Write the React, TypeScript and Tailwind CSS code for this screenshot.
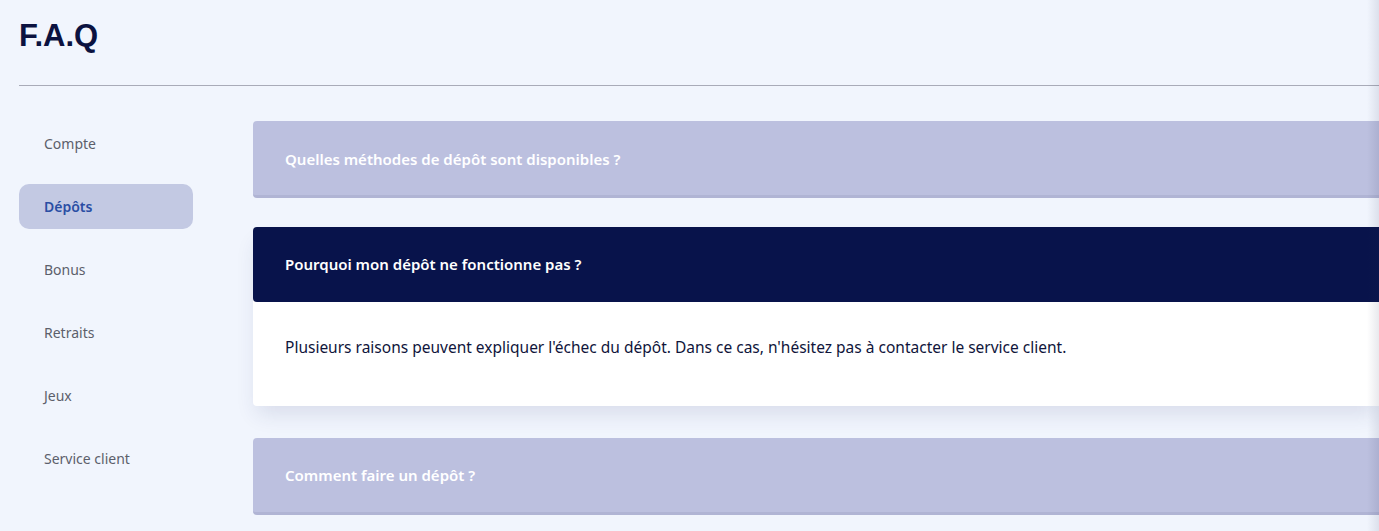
import React from "react";

const items = ["Compte", "Dépôts", "Bonus", "Retraits", "Jeux", "Service client"];

export default function App() {
  return (
    <div className="relative min-h-[531px] w-full overflow-hidden bg-[#f1f5fd]" style={{ fontFamily: '"Noto Sans", sans-serif' }}>
      <div className="px-[19px] pt-[16px]">
        <h1 className="text-[31px] leading-[40px] font-bold text-[#0b1240]" style={{ fontFamily: '"Liberation Sans", Arial, sans-serif' }}>F.A.Q</h1>
      </div>
      <div className="ml-[19px] mt-[29px] h-px bg-[#a9abb8]" />
      <div className="flex pl-[19px] pt-[35px]">
        <nav className="flex w-[174px] shrink-0 flex-col gap-[18px]">
          {items.map((it) => (
            <div
              key={it}
              className={`flex h-[45px] items-center rounded-[10px] pl-[25px] text-[14px] ${
                it === "Dépôts" ? "bg-[#c3c9e3] font-semibold text-[#2a4ea4]" : "text-[#5c5f6b]"
              }`}
            >
              {it}
            </div>
          ))}
        </nav>
        <div className="ml-[60px] flex flex-1 flex-col">
          <div className="flex h-[77px] items-center rounded-l-[4px] border-b-[3px] border-[#b0b4d4] bg-[#bcc0df] pl-[32px] pt-[2px] text-[15px] font-semibold text-white">
            Quelles méthodes de dépôt sont disponibles ?
          </div>
          <div className="mt-[29px] rounded-l-[4px] bg-white shadow-[0_12px_20px_-4px_rgba(40,50,110,0.12)]">
            <div className="flex h-[75px] items-center rounded-l-[4px] bg-[#08134b] pl-[32px] text-[15px] font-semibold text-white">
              Pourquoi mon dépôt ne fonctionne pas ?
            </div>
            <div className="h-[104px] pl-[32px] pt-[34px] text-[15.5px] leading-[22px] text-[#10153b]">
              Plusieurs raisons peuvent expliquer l'échec du dépôt. Dans ce cas, n'hésitez pas à contacter le service client.
            </div>
          </div>
          <div className="mt-[32px] flex h-[77px] items-center rounded-l-[4px] border-b-[3px] border-[#b0b4d4] bg-[#bcc0df] pl-[32px] text-[15px] font-semibold text-white">
            Comment faire un dépôt ?
          </div>
        </div>
      </div>
      <div className="pointer-events-none absolute right-0 top-0 h-full w-[12px] bg-gradient-to-r from-transparent to-[rgba(30,40,80,0.10)]" />
    </div>
  );
}
